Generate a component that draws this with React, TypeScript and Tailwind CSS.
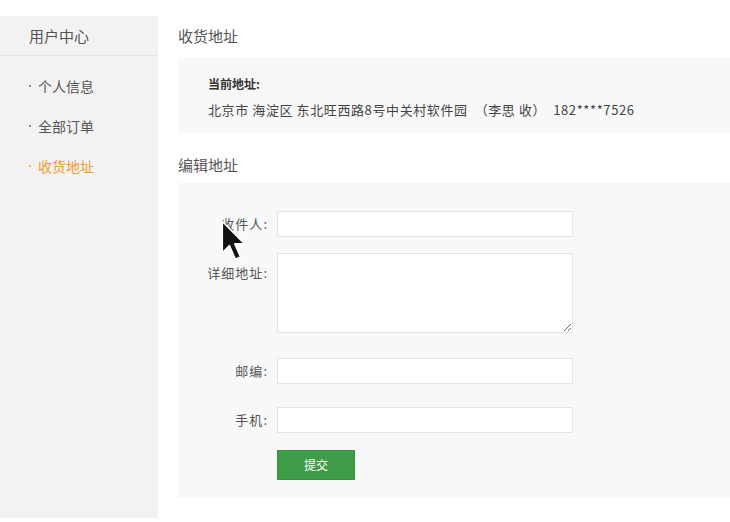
import React from 'react';

const font = { fontFamily: '"Noto Sans CJK SC", "Noto Sans", sans-serif' };

const menu = [
    { label: '个人信息', active: false },
    { label: '全部订单', active: false },
    { label: '收货地址', active: true },
];

function Field({ label, children, labelTop = false }: { label: string; children: React.ReactNode; labelTop?: boolean }) {
    return (
        <div className={`flex ${labelTop ? 'items-start' : 'items-center'}`}>
            <label className={`w-[92px] shrink-0 pr-[2px] text-right text-[13px] tracking-[1px] leading-[26px] text-[#555] ${labelTop ? 'pt-[7px]' : ''}`}>
                {label}:
            </label>
            <div className="ml-[7px]">{children}</div>
        </div>
    );
}

export default function App() {
    return (
        <div className="relative w-[730px] h-[522px] bg-white flex pt-[16px] overflow-hidden" style={font}>
            {/* Sidebar */}
            <aside className="w-[158px] h-[502px] shrink-0 bg-[#f2f2f2]">
                <div className="h-[40px] leading-[40px] pl-[29px] text-[15px] text-[#555] border-b border-[#e3e3e3]">
                    用户中心
                </div>
                <ul className="pt-[10px]">
                    {menu.map((m) => (
                        <li
                            key={m.label}
                            className={`h-[40px] flex items-center pl-[29px] text-[14px] ${m.active ? 'text-[#f39a2b]' : 'text-[#555]'}`}
                        >
                            <span className={`w-[2px] h-[2px] rounded-full mr-[7px] ${m.active ? 'bg-[#f39a2b]' : 'bg-[#666]'}`} />
                            {m.label}
                        </li>
                    ))}
                </ul>
            </aside>

            {/* Main */}
            <main className="ml-[20px] flex-1">
                <h2 className="h-[41px] leading-[40px] text-[15px] text-[#555]">收货地址</h2>
                <div className="bg-[#f8f8f8] pl-[30px] pt-[14px] pb-[10px] text-[12px] leading-[26px] text-[#444]">
                    <div className="font-bold text-[#333]">当前地址:</div>
                    <div className="text-[13px] tracking-[0.6px] whitespace-pre">北京市 海淀区 东北旺西路8号中关村软件园  （李思 收）  182****7526</div>
                </div>

                <h2 className="h-[50px] pt-[22px] leading-[20px] text-[15px] text-[#555]">编辑地址</h2>
                <div className="bg-[#f8f8f8] h-[315px] pt-[28px] flex flex-col">
                    <Field label="收件人">
                        <input className="block w-[296px] h-[26px] bg-white border border-[#e4e4e4] outline-none" />
                    </Field>
                    <div className="mt-[16px]">
                        <Field label="详细地址" labelTop>
                            <textarea className="block w-[296px] h-[80px] bg-white border border-[#e4e4e4] outline-none" />
                        </Field>
                    </div>
                    <div className="mt-[25px]">
                        <Field label="邮编">
                            <input className="block w-[296px] h-[26px] bg-white border border-[#e4e4e4] outline-none" />
                        </Field>
                    </div>
                    <div className="mt-[23px]">
                        <Field label="手机">
                            <input className="block w-[296px] h-[26px] bg-white border border-[#e4e4e4] outline-none" />
                        </Field>
                    </div>
                    <div className="mt-[17px] pl-[99px]">
                        <button className="w-[78px] h-[30px] bg-[#3d9d48] border border-[#36903f] text-white text-[12px]">
                            提交
                        </button>
                    </div>
                </div>
            </main>

            {/* mouse pointer captured in the screenshot */}
            <svg className="absolute left-[221px] top-[220px]" width="26" height="42" viewBox="0 0 20 32">
                <path d="M1 1 L1 25 L6.5 19.5 L11 30 L15 28.2 L10.6 18.2 L18 18 Z" fill="#111" stroke="#fff" strokeWidth="1.2" strokeLinejoin="round" />
            </svg>
        </div>
    );
}
